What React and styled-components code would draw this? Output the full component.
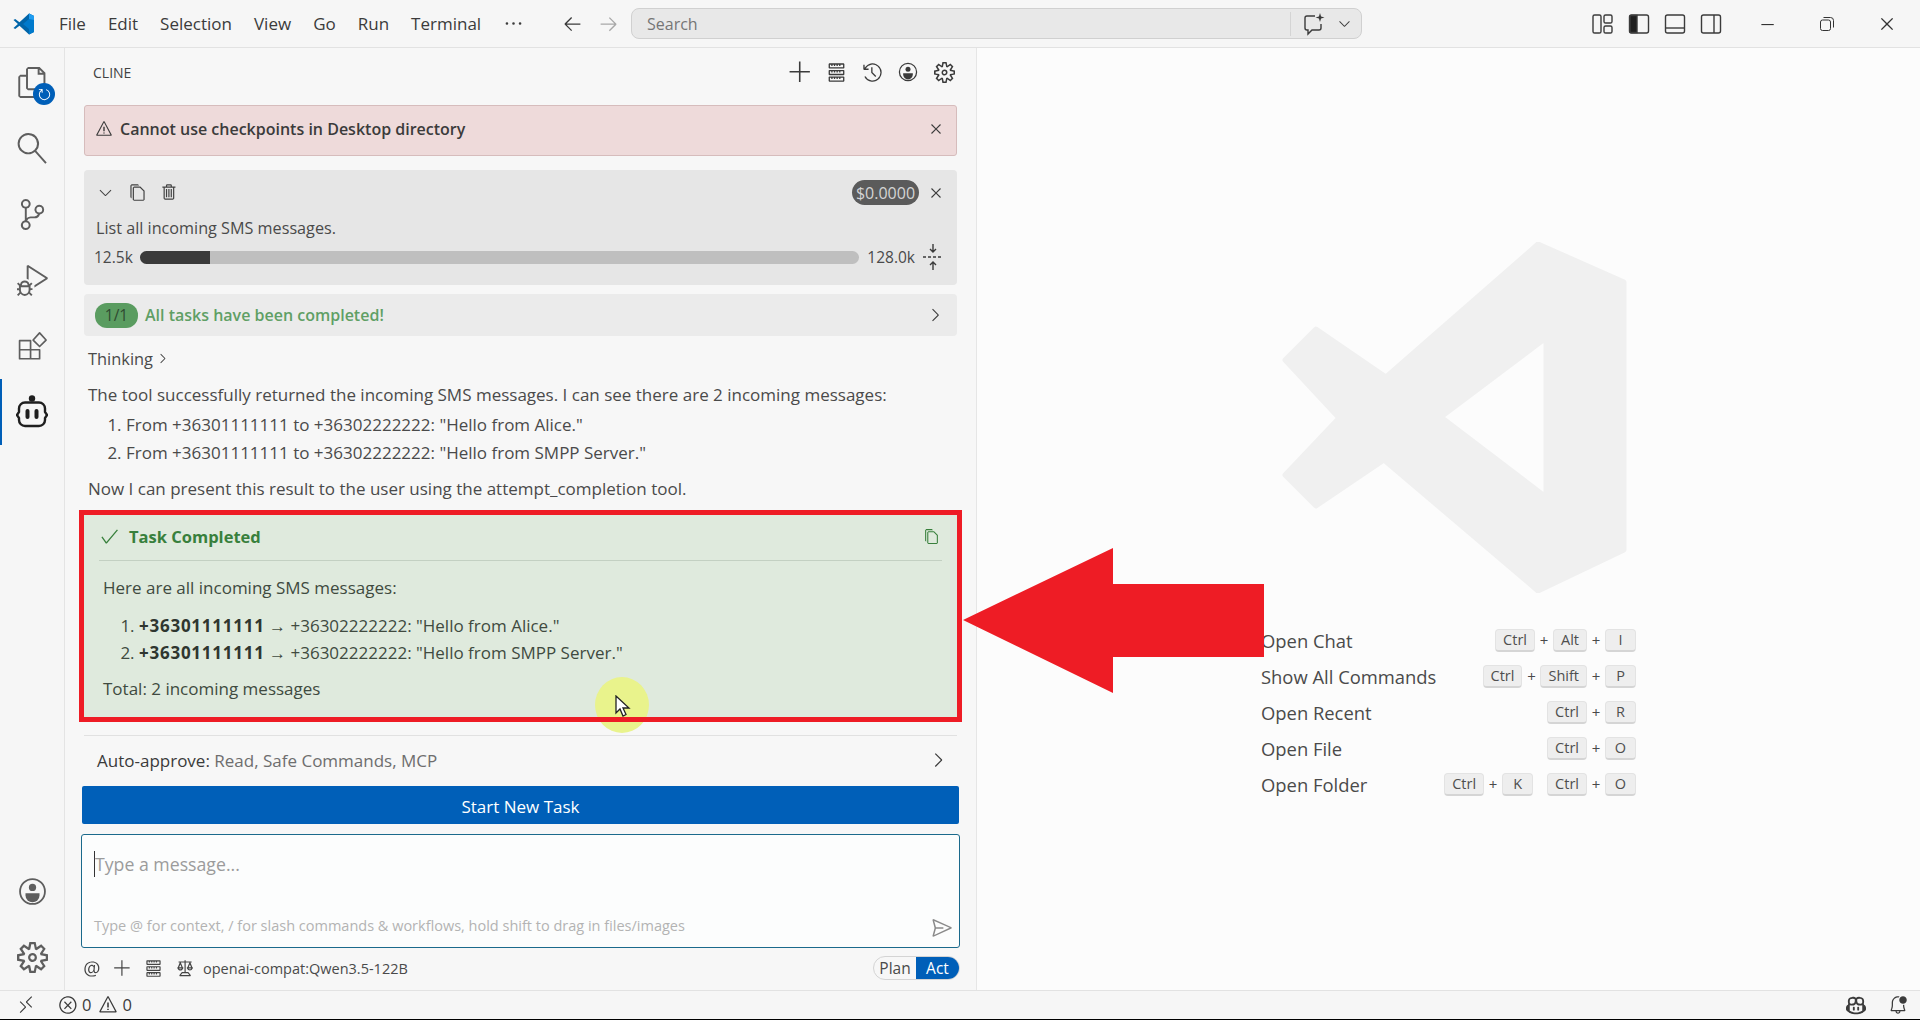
import React from "react";
import styled, { createGlobalStyle } from "styled-components";
import {
  VscAdd,
  VscArrowLeft,
  VscArrowRight,
  VscBellDot,
  VscCheck,
  VscChevronDown,
  VscChevronRight,
  VscChromeClose,
  VscChromeMinimize,
  VscClose,
  VscCopilot,
  VscCopy,
  VscDebugAlt,
  VscEllipsis,
  VscError,
  VscFiles,
  VscHistory,
  VscLaw,
  VscMention,
  VscRefresh,
  VscRemote,
  VscSearch,
  VscSend,
  VscServer,
  VscSettingsGear,
  VscSourceControl,
  VscTrash,
  VscWarning,
} from "react-icons/vsc";

const FONT = `"Open Sans", "Noto Sans", sans-serif`;

const GlobalStyle = createGlobalStyle`
  html, body { margin: 0; padding: 0; height: 1020px; overflow: hidden; }
  body { font-family: ${FONT}; color: #3b3b3b; background: #000; }
  * { box-sizing: border-box; }
`;

const Window = styled.div`
  position: relative;
  width: 1920px;
  height: 1019px;
  display: grid;
  grid-template-rows: 48px 942px 29px;
  overflow: hidden;
  background: #f7f7f7;
`;

/* title bar */
const TitleBar = styled.header`
  display: flex;
  align-items: center;
  background: #f6f6f6;
  border-bottom: 1px solid #e2e2e2;
`;
const TitleLeft = styled.div`
  width: 631px;
  flex: none;
  display: flex;
  align-items: center;
  padding-left: 12px;
`;
const Logo = styled.svg`
  flex: none;
  width: 24px;
  height: 24px;
  margin-right: 23px;
`;
const MenuItem = styled.span`
  font-size: 17px;
  margin-right: 22px;
  color: #3b3b3b;
`;
const NavIcon = styled.span`
  display: flex;
  font-size: 21px;
  margin-right: ${(p) => p.$gap ?? 15}px;
  color: ${(p) => (p.$dim ? "#a8a8a8" : "#3b3b3b")};
`;
const SearchBox = styled.div`
  width: 731px;
  height: 31px;
  display: flex;
  align-items: center;
  padding: 0 8px 0 15px;
  background: #e8e8e8;
  border: 1px solid #d0d0d0;
  border-radius: 8px;
  font-size: 16px;
  color: #767676;
`;
const SearchLabel = styled.span`
  flex: 1;
`;
const SearchDivider = styled.span`
  width: 1px;
  height: 24px;
  background: #d4d4d4;
  margin-right: 11px;
`;
const SearchChevron = styled.span`
  display: flex;
  margin-left: 10px;
  font-size: 17px;
  color: #3b3b3b;
`;
const TitleRight = styled.div`
  flex: 1;
  display: flex;
  align-items: center;
  padding-left: 229px;
`;
const LayoutIcon = styled.svg`
  width: 24px;
  height: 24px;
  margin-right: 12px;
  fill: none;
  stroke: #3b3b3b;
  stroke-width: 1.4;
`;
const WindowControls = styled.div`
  display: flex;
  margin-left: 2px;
`;
const WindowButton = styled.span`
  display: flex;
  justify-content: center;
  width: 60px;
  font-size: 18px;
  color: #333;
`;

/* main area */
const Main = styled.div`
  display: grid;
  grid-template-columns: 65px 912px 1fr;
  min-height: 0;
`;
const ActivityBar = styled.nav`
  position: relative;
  display: flex;
  flex-direction: column;
  align-items: center;
  padding-top: 1px;
  background: #f6f6f6;
  border-right: 1px solid #e4e4e4;
`;
const ActivityItem = styled.div`
  position: relative;
  width: 100%;
  height: 66px;
  display: flex;
  align-items: center;
  justify-content: center;
  font-size: 31px;
  color: ${(p) => (p.$active ? "#1f1f1f" : "#5e5e5e")};
`;
const MirroredIcon = styled.span`
  display: flex;
  transform: scaleX(-1);
`;
const ActiveMark = styled.span`
  position: absolute;
  left: 0;
  top: 0;
  bottom: 0;
  width: 2px;
  background: #005fb8;
`;
const SyncBadge = styled.span`
  position: absolute;
  right: 9px;
  bottom: 10px;
  width: 22px;
  height: 22px;
  border-radius: 50%;
  background: #005fb8;
  color: #fff;
  font-size: 15px;
  display: flex;
  align-items: center;
  justify-content: center;
`;
const ActivitySpacer = styled.div`
  flex: 1;
`;

const Sidebar = styled.aside`
  padding: 0 19px;
  background: #f7f7f7;
  border-right: 1px solid #e6e6e6;
  font-size: 17px;
`;
const SideHeader = styled.div`
  height: 48px;
  display: flex;
  align-items: center;
  padding: 0 0 0 9px;
  margin-right: -5px;
`;
const SideTitle = styled.span`
  flex: 1;
  font-size: 14px;
  color: #424242;
`;
const HeaderIcon = styled.span`
  display: flex;
  justify-content: center;
  width: 36px;
  font-size: ${(p) => p.$size || 21}px;
  color: #3b3b3b;
`;
const Banner = styled.div`
  height: 51px;
  margin-top: 9px;
  display: flex;
  align-items: center;
  padding: 0 11px 3px 10px;
  background: #eedada;
  border: 1px solid #d6bcbc;
  border-radius: 3px;
  font-weight: 600;
`;
const BannerText = styled.span`
  flex: 1;
  margin-left: 7px;
  font-size: 16px;
`;
const TaskCard = styled.section`
  height: 115px;
  margin-top: 14px;
  padding: 10px 12px 0 12px;
  background: #e6e6e6;
  border-radius: 4px;
`;
const TaskTop = styled.div`
  height: 25px;
  display: flex;
  align-items: center;
  font-size: 18px;
  color: #424242;
`;
const TaskIcon = styled.span`
  display: flex;
  width: 32px;
  font-size: 19px;
`;
const Grow = styled.span`
  flex: 1;
`;
const CostPill = styled.span`
  height: 25px;
  width: 67px;
  margin-right: 8px;
  display: flex;
  align-items: center;
  justify-content: center;
  border-radius: 13px;
  background: #5b5b5b;
  color: #d4d4d4;
  font-size: 16px;
`;
const TaskLabel = styled.div`
  margin-top: 12px;
  height: 22px;
  line-height: 22px;
  font-size: 16.2px;
  color: #4a4a4a;
`;
const UsageRow = styled.div`
  margin: 5px 0 0 -2px;
  height: 26px;
  display: flex;
  align-items: center;
  font-size: 15.5px;
  color: #4a4a4a;
`;
const UsageTrack = styled.div`
  flex: 1;
  height: 13px;
  margin: 0 8px 0 7px;
  border-radius: 7px;
  background: #bfbfbf;
  overflow: hidden;
`;
const UsageFill = styled.div`
  height: 100%;
  background: #3a3a3a;
`;
const CompactIcon = styled.svg`
  width: 24px;
  height: 28px;
  margin-left: 6px;
  stroke: #3b3b3b;
  fill: none;
  stroke-width: 1.4;
`;
const TodoRow = styled.div`
  height: 42px;
  margin-top: 9px;
  display: flex;
  align-items: center;
  padding: 0 12px 0 11px;
  background: #ebebeb;
  border-radius: 4px;
  font-size: 16px;
`;
const TodoPill = styled.span`
  width: 43px;
  height: 25px;
  display: flex;
  align-items: center;
  justify-content: center;
  border-radius: 12px;
  background: #5a9c60;
  color: #2f4a31;
  font-size: 15.5px;
`;
const TodoText = styled.span`
  flex: 1;
  margin-left: 7px;
  font-weight: 600;
  color: #5f9f65;
`;
const ChevronSlot = styled.span`
  display: flex;
  font-size: ${(p) => p.$size || 20}px;
  color: ${(p) => p.$color || "#3b3b3b"};
`;
const ThinkingRow = styled.div`
  height: 24px;
  margin-top: 10px;
  padding-left: 4px;
  display: flex;
  align-items: center;
  gap: 2px;
  font-size: 16.4px;
  color: #4a4a4a;
`;
const Paragraph = styled.p`
  margin: ${(p) => p.$top || 0}px 0 0 4px;
  height: 24px;
  line-height: 24px;
  color: #4a4a4a;
`;
const PlainList = styled.ol`
  margin: 4px 0 0 0;
  padding: 0 0 0 42px;
  line-height: 28px;
  color: #4a4a4a;
`;

/* completion box */
const CompletedBox = styled.section`
  position: relative;
  height: 202px;
  margin-top: 14px;
  padding: 0 19px;
  background: #dfeadd;
`;
const CompletedHead = styled.div`
  height: 46px;
  display: flex;
  align-items: center;
  padding: 0 2px 2px 0;
  border-bottom: 1px solid #c3d0c2;
  color: #38803c;
  font-size: 16.5px;
  font-weight: 700;
  margin: 0 -4px;
`;
const CompletedTitle = styled.span`
  flex: 1;
  margin-left: 9px;
`;
const CheckSlot = styled.span`
  display: flex;
  font-size: 21px;
`;
const CompletedLine = styled.p`
  margin: ${(p) => p.$top || 0}px 0 0 0;
  height: 24px;
  line-height: 24px;
  color: #404a40;
`;
const CompletedList = styled.ol`
  margin: 12px 0 0 0;
  padding: 0 0 0 36px;
  line-height: 27px;
  color: #404a40;
`;
const Strong = styled.strong`
  font-weight: 700;
  letter-spacing: 0.75px;
  color: #2f362f;
`;
const RedFrame = styled.div`
  position: absolute;
  inset: -5px;
  border: 5px solid #ee1c25;
  pointer-events: none;
  z-index: 3;
`;
const CursorGlow = styled.div`
  position: absolute;
  left: 511px;
  top: 162px;
  width: 54px;
  height: 56px;
  border-radius: 50%;
  background: #e9f38c;
  z-index: 2;
`;
const CursorArrow = styled.svg`
  position: absolute;
  left: 20px;
  top: 18px;
  width: 16px;
  height: 23px;
`;

/* bottom of the chat */
const Divider = styled.div`
  height: 1px;
  margin-top: 18px;
  background: #e1e1e1;
`;
const ApproveRow = styled.div`
  height: 48px;
  display: flex;
  align-items: center;
  padding: 0 8px 0 13px;
  color: #3b3b3b;
`;
const ApproveText = styled.span`
  flex: 1;
`;
const ApproveValues = styled.span`
  color: #6e6e6e;
`;
const PrimaryButton = styled.button`
  display: block;
  width: calc(100% + 4px);
  height: 38px;
  margin: 2px -2px 0;
  padding: 2px 0 0;
  border: 0;
  border-radius: 2px;
  background: #005fb8;
  color: #fff;
  font: 17px ${FONT};
`;
const InputBox = styled.div`
  position: relative;
  height: 114px;
  margin: 10px -3px 0;
  padding: 16px 12px 0 12px;
  background: #fcfdfd;
  border: 1px solid #1b6a8c;
  border-radius: 3px;
`;
const Placeholder = styled.div`
  height: 26px;
  line-height: 26px;
  border-left: 1px solid #333;
  font-size: 17.7px;
  color: #9b9b9b;
`;
const Hint = styled.div`
  margin-top: 39px;
  display: flex;
  align-items: center;
  font-size: 14.5px;
  color: #b3b3b3;
`;
const SendSlot = styled.span`
  position: absolute;
  right: 6px;
  bottom: 8px;
  display: flex;
  font-size: 22px;
  color: #8a8a8a;
`;
const ToolRow = styled.div`
  height: 24px;
  margin: 8px -3px 0 -8px;
  display: flex;
  align-items: center;
`;
const ToolIcon = styled.span`
  display: flex;
  justify-content: center;
  width: 31px;
  font-size: 19px;
  color: #444;
`;
const ModelName = styled.span`
  flex: 1;
  margin-left: 3px;
  font-size: 14.5px;
  color: #4a4a4a;
`;
const ModeSwitch = styled.div`
  width: 87px;
  height: 24px;
  display: flex;
  border: 1px solid #d4d4d4;
  border-radius: 12px;
  overflow: hidden;
`;
const ModeOption = styled.span`
  flex: ${(p) => (p.$active ? "0 0 43px" : "1")};
  display: flex;
  align-items: center;
  justify-content: center;
  font-size: 15.5px;
  background: ${(p) => (p.$active ? "#005fb8" : "transparent")};
  color: ${(p) => (p.$active ? "#fff" : "#4a4a4a")};
`;

/* editor */
const Editor = styled.main`
  display: flex;
  flex-direction: column;
  align-items: center;
  padding-top: 194px;
  background: #fcfcfc;
`;
const Watermark = styled.svg`
  width: 400px;
  height: 351px;
  fill: #f0f0f0;
  stroke: #f0f0f0;
  stroke-width: 5;
  stroke-linejoin: round;
`;
const Shortcuts = styled.div`
  width: 375px;
  margin-top: 29px;
`;
const ShortcutRow = styled.div`
  height: 36px;
  display: flex;
  align-items: center;
  font-size: 18.4px;
  color: #4a4a4a;
`;
const ShortcutName = styled.span`
  flex: 1;
`;
const Key = styled.span`
  min-width: 31px;
  height: 23px;
  padding: 0 7px;
  display: flex;
  align-items: center;
  justify-content: center;
  font-size: 14.5px;
  color: #4f4f4f;
  background: #eeeeee;
  border: 1px solid #e3e3e3;
  border-bottom: 2px solid #d5d5d5;
  border-radius: 4px;
`;
const Plus = styled.span`
  width: 18px;
  text-align: center;
  font-size: 15px;
`;
const ChordGap = styled.span`
  width: 14px;
`;

/* status bar */
const StatusBar = styled.footer`
  display: flex;
  align-items: center;
  height: 28px;
  padding: 0 10px 0 16px;
  background: #f6f6f6;
  border-top: 1px solid #e2e2e2;
  font-size: 16.5px;
  color: #3b3b3b;
`;
const StatusIcon = styled.span`
  display: flex;
  font-size: 20px;
  margin: 0 ${(p) => p.$right || 4}px 0 ${(p) => p.$left || 0}px;
`;

const RedArrow = styled.svg`
  position: absolute;
  left: 963px;
  top: 548px;
  width: 301px;
  height: 146px;
  z-index: 3;
`;

const shortcuts = [
  { name: "Open Chat", keys: [["Ctrl", "Alt", "I"]] },
  { name: "Show All Commands", keys: [["Ctrl", "Shift", "P"]] },
  { name: "Open Recent", keys: [["Ctrl", "R"]] },
  { name: "Open File", keys: [["Ctrl", "O"]] },
  { name: "Open Folder", keys: [["Ctrl", "K"], ["Ctrl", "O"]] },
];

const CodeLogo = () => (
  <Logo viewBox="0 0 24 24">
    <path fill="#0065a9" d="M17 1.5 22 4v16l-5 2.5-9.5-8.7-4.3 3.3L1.5 16l4.4-4-4.4-4 1.7-1.1 4.3 3.3z" />
    <path fill="#007acc" d="M17 1.5 22 4v16l-5 2.5zM17 7l-6 5 6 5z" fillRule="evenodd" />
    <path fill="#1f9cf0" d="M17 1.5 22 4v4l-5-1z" />
  </Logo>
);

const ClineIcon = () => (
  <svg width="32" height="36" viewBox="0 0 32 36" fill="none" stroke="#1f1f1f" strokeWidth="2.4">
    <circle cx="16" cy="4.5" r="3.2" fill="#1f1f1f" stroke="none" />
    <path d="M9 8.5h14a6 6 0 0 1 6 6V18l2 3-2 3v2a6 6 0 0 1-6 6H9a6 6 0 0 1-6-6v-2l-2-3 2-3v-3.5a6 6 0 0 1 6-6z" />
    <rect x="9.5" y="15" width="4" height="10" rx="2" fill="#1f1f1f" stroke="none" />
    <rect x="18.5" y="15" width="4" height="10" rx="2" fill="#1f1f1f" stroke="none" />
  </svg>
);

const ChatSparkle = () => (
  <svg width="24" height="24" viewBox="0 0 24 24" fill="none" stroke="#3b3b3b" strokeWidth="1.4">
    <path d="M13 4H5a2 2 0 0 0-2 2v10a2 2 0 0 0 2 2h1v4l4-4h7a2 2 0 0 0 2-2v-4" />
    <path fill="#3b3b3b" stroke="none" d="M18 1l1.1 3.4L22.5 5.5l-3.4 1.1L18 10l-1.1-3.4L13.5 5.5l3.4-1.1z" />
  </svg>
);

const AccountIcon = ({ size }) => (
  <svg width={size} height={size} viewBox="0 0 24 24" fill="none" stroke="currentColor" strokeWidth="1.5">
    <circle cx="12" cy="12" r="10.3" />
    <circle cx="12" cy="8.6" r="3" fill="currentColor" stroke="none" />
    <path d="M6.2 13.5h11.6v1.6a5.8 5.8 0 0 1-11.6 0z" fill="currentColor" stroke="none" />
  </svg>
);

const ExtensionsIcon = () => (
  <svg width="31" height="31" viewBox="0 0 24 24" fill="none" stroke="currentColor" strokeWidth="1.3" strokeLinejoin="round">
    <path d="M2 7.5h8.5V21.5H2zM2 14.5h15.5V21.5H10.5" />
    <path d="M17.5 1.5 22.5 7l-5 5-5-5z" />
  </svg>
);

const RestoreIcon = () => (
  <svg width="18" height="18" viewBox="0 0 18 18" fill="none" stroke="#333" strokeWidth="1">
    <rect x="2.5" y="5" width="10" height="10.5" rx="2" />
    <path d="M5.5 2.5h7a3 3 0 0 1 3 3v7" />
  </svg>
);

export default function App() {
  return (
    <>
      <GlobalStyle />
      <Window>
        <TitleBar>
          <TitleLeft>
            <CodeLogo />
            {["File", "Edit", "Selection", "View", "Go", "Run", "Terminal"].map((m) => (
              <MenuItem key={m}>{m}</MenuItem>
            ))}
            <NavIcon $gap={38}>
              <VscEllipsis />
            </NavIcon>
            <NavIcon>
              <VscArrowLeft />
            </NavIcon>
            <NavIcon $dim $gap={0}>
              <VscArrowRight />
            </NavIcon>
          </TitleLeft>
          <SearchBox>
            <SearchLabel>Search</SearchLabel>
            <SearchDivider />
            <ChatSparkle />
            <SearchChevron>
              <VscChevronDown />
            </SearchChevron>
          </SearchBox>
          <TitleRight>
            <LayoutIcon viewBox="0 0 24 24">
              <rect x="2" y="3" width="8" height="18" rx="1.6" />
              <rect x="13" y="3" width="8" height="8" rx="1.6" />
              <rect x="13" y="14" width="8" height="7" rx="1.6" />
            </LayoutIcon>
            <LayoutIcon viewBox="0 0 24 24">
              <rect x="2.5" y="3" width="19" height="18" rx="2" />
              <path d="M3 4.5a1 1 0 0 1 1-1h6v17H4a1 1 0 0 1-1-1z" fill="#1f1f1f" />
            </LayoutIcon>
            <LayoutIcon viewBox="0 0 24 24">
              <rect x="2.5" y="3" width="19" height="18" rx="2" />
              <path d="M3 16h18" />
            </LayoutIcon>
            <LayoutIcon viewBox="0 0 24 24">
              <rect x="2.5" y="3" width="19" height="18" rx="2" />
              <path d="M15 3v18" />
            </LayoutIcon>
            <WindowControls>
              <WindowButton>
                <VscChromeMinimize />
              </WindowButton>
              <WindowButton>
                <RestoreIcon />
              </WindowButton>
              <WindowButton>
                <VscChromeClose />
              </WindowButton>
            </WindowControls>
          </TitleRight>
        </TitleBar>

        <Main>
          <ActivityBar>
            <ActivityItem>
              <VscFiles />
              <SyncBadge>
                <VscRefresh />
              </SyncBadge>
            </ActivityItem>
            <ActivityItem>
              <MirroredIcon>
                <VscSearch />
              </MirroredIcon>
            </ActivityItem>
            <ActivityItem>
              <VscSourceControl />
            </ActivityItem>
            <ActivityItem>
              <VscDebugAlt />
            </ActivityItem>
            <ActivityItem>
              <ExtensionsIcon />
            </ActivityItem>
            <ActivityItem $active>
              <ActiveMark />
              <ClineIcon />
            </ActivityItem>
            <ActivitySpacer />
            <ActivityItem>
              <AccountIcon size={29} />
            </ActivityItem>
            <ActivityItem>
              <VscSettingsGear />
            </ActivityItem>
          </ActivityBar>

          <Sidebar>
            <SideHeader>
              <SideTitle>CLINE</SideTitle>
              <HeaderIcon $size={25}>
                <VscAdd />
              </HeaderIcon>
              <HeaderIcon>
                <VscServer />
              </HeaderIcon>
              <HeaderIcon>
                <VscHistory />
              </HeaderIcon>
              <HeaderIcon>
                <AccountIcon size={20} />
              </HeaderIcon>
              <HeaderIcon>
                <VscSettingsGear />
              </HeaderIcon>
            </SideHeader>

            <Banner>
              <ChevronSlot $size={18}>
                <VscWarning />
              </ChevronSlot>
              <BannerText>Cannot use checkpoints in Desktop directory</BannerText>
              <ChevronSlot $size={18}>
                <VscClose />
              </ChevronSlot>
            </Banner>

            <TaskCard>
              <TaskTop>
                <TaskIcon>
                  <VscChevronDown />
                </TaskIcon>
                <TaskIcon>
                  <VscCopy />
                </TaskIcon>
                <TaskIcon>
                  <VscTrash />
                </TaskIcon>
                <Grow />
                <CostPill>$0.0000</CostPill>
                <ChevronSlot $size={18}>
                  <VscClose />
                </ChevronSlot>
              </TaskTop>
              <TaskLabel>List all incoming SMS messages.</TaskLabel>
              <UsageRow>
                12.5k
                <UsageTrack>
                  <UsageFill style={{ width: `${(12.5 / 128) * 100}%` }} />
                </UsageTrack>
                128.0k
                <CompactIcon viewBox="0 0 24 28">
                  <path d="M12 1v8M9 6l3 3 3-3M12 27v-8M9 22l3-3 3 3" />
                  <path d="M2 14h20" strokeDasharray="3 2" />
                </CompactIcon>
              </UsageRow>
            </TaskCard>

            <TodoRow>
              <TodoPill>1/1</TodoPill>
              <TodoText>All tasks have been completed!</TodoText>
              <ChevronSlot>
                <VscChevronRight />
              </ChevronSlot>
            </TodoRow>

            <ThinkingRow>
              Thinking
              <ChevronSlot $size={15}>
                <VscChevronRight />
              </ChevronSlot>
            </ThinkingRow>
            <Paragraph $top={13}>
              The tool successfully returned the incoming SMS messages. I can see there are 2 incoming messages:
            </Paragraph>
            <PlainList>
              <li>From +36301111111 to +36302222222: "Hello from Alice."</li>
              <li>From +36301111111 to +36302222222: "Hello from SMPP Server."</li>
            </PlainList>
            <Paragraph $top={10}>Now I can present this result to the user using the attempt_completion tool.</Paragraph>

            <CompletedBox>
              <CompletedHead>
                <CheckSlot>
                  <VscCheck />
                </CheckSlot>
                <CompletedTitle>Task Completed</CompletedTitle>
                <ChevronSlot $size={17} $color="#38803c">
                  <VscCopy />
                </ChevronSlot>
              </CompletedHead>
              <CompletedLine $top={15}>Here are all incoming SMS messages:</CompletedLine>
              <CompletedList>
                <li>
                  <Strong>+36301111111</Strong> → +36302222222: "Hello from Alice."
                </li>
                <li>
                  <Strong>+36301111111</Strong> → +36302222222: "Hello from SMPP Server."
                </li>
              </CompletedList>
              <CompletedLine $top={11}>Total: 2 incoming messages</CompletedLine>
              <RedFrame />
              <CursorGlow>
                <CursorArrow viewBox="0 0 16 23">
                  <path d="M1 1v17l4-4 3 7 3-1.5-3-6.5h6z" fill="#fff" stroke="#222" strokeWidth="1.3" />
                </CursorArrow>
              </CursorGlow>
            </CompletedBox>

            <Divider />
            <ApproveRow>
              <ApproveText>
                Auto-approve: <ApproveValues>Read, Safe Commands, MCP</ApproveValues>
              </ApproveText>
              <ChevronSlot $size={22}>
                <VscChevronRight />
              </ChevronSlot>
            </ApproveRow>
            <PrimaryButton>Start New Task</PrimaryButton>
            <InputBox>
              <Placeholder>Type a message...</Placeholder>
              <Hint>Type @ for context, / for slash commands &amp; workflows, hold shift to drag in files/images</Hint>
              <SendSlot>
                <VscSend />
              </SendSlot>
            </InputBox>
            <ToolRow>
              <ToolIcon>
                <VscMention />
              </ToolIcon>
              <ToolIcon>
                <VscAdd />
              </ToolIcon>
              <ToolIcon>
                <VscServer />
              </ToolIcon>
              <ToolIcon>
                <VscLaw />
              </ToolIcon>
              <ModelName>openai-compat:Qwen3.5-122B</ModelName>
              <ModeSwitch>
                <ModeOption>Plan</ModeOption>
                <ModeOption $active>Act</ModeOption>
              </ModeSwitch>
            </ToolRow>
          </Sidebar>

          <Editor>
            <Watermark viewBox="1248 242 400 351">
              <path
                fillRule="evenodd"
                d="M1537 244 1623 282V550L1537 591 1383 460 1315 506 1284 475 1338 418 1284 360 1315 329 1385 377ZM1545 338 1440 417 1545 497Z"
              />
            </Watermark>
            <Shortcuts>
              {shortcuts.map((s) => (
                <ShortcutRow key={s.name}>
                  <ShortcutName>{s.name}</ShortcutName>
                  {s.keys.map((chord, i) => (
                    <React.Fragment key={i}>
                      {i > 0 && <ChordGap />}
                      {chord.map((k, j) => (
                        <React.Fragment key={k}>
                          {j > 0 && <Plus>+</Plus>}
                          <Key>{k}</Key>
                        </React.Fragment>
                      ))}
                    </React.Fragment>
                  ))}
                </ShortcutRow>
              ))}
            </Shortcuts>
          </Editor>
        </Main>

        <StatusBar>
          <StatusIcon $right={22}>
            <VscRemote />
          </StatusIcon>
          <StatusIcon>
            <VscError />
          </StatusIcon>
          0
          <StatusIcon $left={7}>
            <VscWarning />
          </StatusIcon>
          0
          <Grow />
          <StatusIcon $right={22}>
            <VscCopilot />
          </StatusIcon>
          <StatusIcon $right={2}>
            <VscBellDot />
          </StatusIcon>
        </StatusBar>

        <RedArrow viewBox="0 0 301 146">
          <path fill="#ee1c25" d="M0 72 150 0V36H301V109H150V145Z" />
        </RedArrow>
      </Window>
    </>
  );
}
